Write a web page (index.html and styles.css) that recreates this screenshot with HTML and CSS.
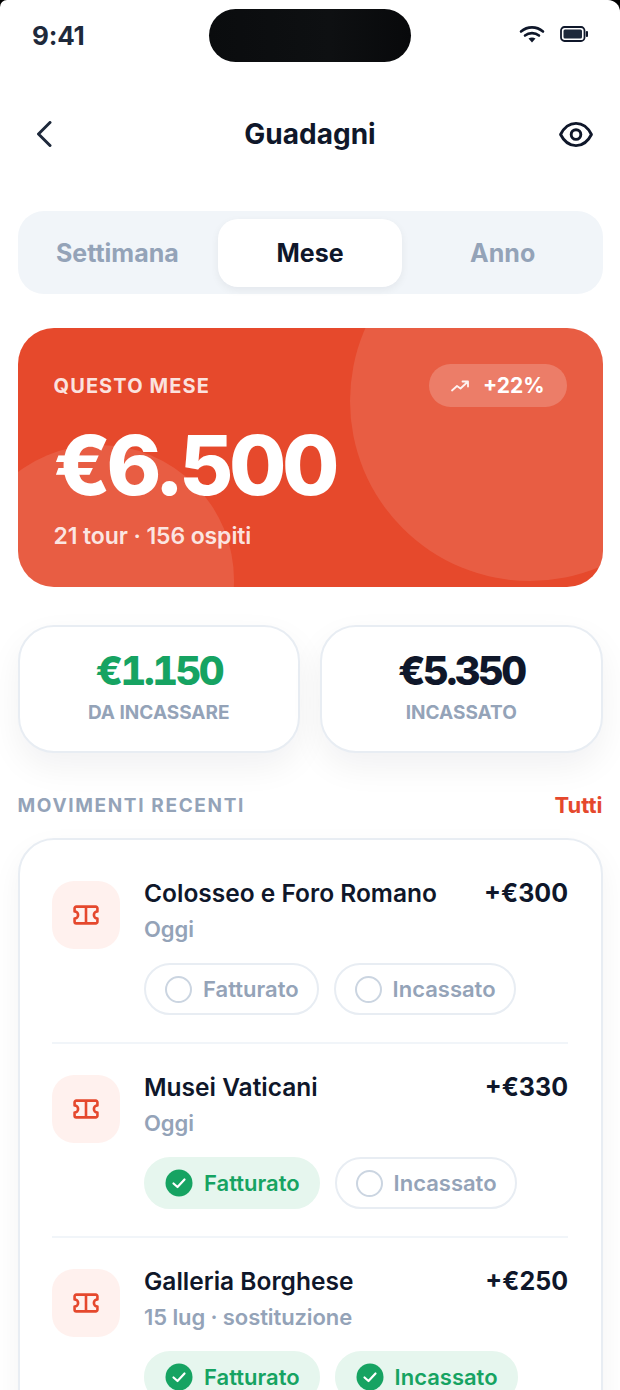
FILE: index.html
```html
<!DOCTYPE html>
<html lang="it">
<head>
    <meta charset="UTF-8">
    <meta name="viewport" content="width=device-width, initial-scale=1.0">
    <title>Guadagni</title>
    <link rel="stylesheet" href="styles.css">
</head>
<body>
    <div class="screen">
        <div class="status-bar">
            <span class="time">9:41</span>
            <div class="island"></div>
            <div class="status-icons">
                <svg width="26" height="18" viewBox="0 0 26 18"><path d="M2 6.500C8.500 1 17.500 1 24 6.500M6 10.500C10 7.300 16 7.300 20 10.500" fill="none" stroke="#0f172a" stroke-width="2.600" stroke-linecap="round"/><path d="M9.500 13.500C11.500 12 14.500 12 16.500 13.500L13 17.500Z" fill="#0f172a"/></svg>
                <svg width="28" height="16" viewBox="0 0 28 16"><rect x="1" y="1" width="23.500" height="14" rx="3.500" fill="none" stroke="#0f172a" stroke-width="1.800"/><rect x="3.500" y="3.500" width="18.500" height="9" rx="1.500" fill="#1e293b"/><rect x="25.800" y="5" width="2.200" height="6" rx="1" fill="#0f172a"/></svg>
            </div>
        </div>

        <div class="nav">
            <svg class="back" width="16" height="26" viewBox="0 0 16 26"><path d="M14 1.500L2.500 13L14 24.500" fill="none" stroke="#1e293b" stroke-width="3" stroke-linecap="round" stroke-linejoin="round"/></svg>
            <h1>Guadagni</h1>
            <svg class="eye" width="36" height="27" viewBox="0 0 36 28"><path d="M2 14C6 6 11.500 2.500 18 2.500S30 6 34 14C30 22 24.500 25.500 18 25.500S6 22 2 14Z" fill="none" stroke="#0f172a" stroke-width="3" stroke-linejoin="round"/><circle cx="18" cy="14" r="5" fill="none" stroke="#0f172a" stroke-width="3"/></svg>
        </div>

        <div class="tabs">
            <div class="tab">Settimana</div>
            <div class="tab active">Mese</div>
            <div class="tab">Anno</div>
        </div>

        <div class="hero">
            <div class="circle-big"></div>
            <div class="circle-small"></div>
            <div class="hero-top">
                <span class="hero-label">QUESTO MESE</span>
                <span class="trend">
                    <svg width="20" height="14" viewBox="0 0 20 14"><path d="M2 11.500L7 7L10.500 9.500L17.500 3M12.500 2.500H18V7.500" fill="none" stroke="#fff" stroke-width="1.800" stroke-linecap="round" stroke-linejoin="round" opacity="0.9"/></svg>
                    +22%
                </span>
            </div>
            <div class="hero-amount">€6.500</div>
            <div class="hero-sub">21 tour · 156 ospiti</div>
        </div>

        <div class="stats">
            <div class="stat">
                <div class="stat-value green">€1.150</div>
                <div class="stat-label">DA INCASSARE</div>
            </div>
            <div class="stat">
                <div class="stat-value">€5.350</div>
                <div class="stat-label">INCASSATO</div>
            </div>
        </div>

        <div class="section-head">
            <span class="section-title">MOVIMENTI RECENTI</span>
            <span class="section-link">Tutti</span>
        </div>

        <div class="list">
            <div class="row">
                <div class="row-icon">
                    <svg width="26" height="20" viewBox="0 0.500 28 21"><path d="M3.500 2H24.500A1.800 1.800 0 0 1 26.300 3.800V7.200A3.800 3.800 0 0 0 26.300 14.800V18.200A1.800 1.800 0 0 1 24.500 20H3.500A1.800 1.800 0 0 1 1.700 18.200V14.800A3.800 3.800 0 0 0 1.700 7.200V3.800A1.800 1.800 0 0 1 3.500 2ZM14 2V20" fill="none" stroke="#e5482d" stroke-width="2.800" stroke-linejoin="round"/></svg>
                </div>
                <div class="row-body">
                    <div class="row-top"><span class="row-title">Colosseo e Foro Romano</span><span class="row-amount">+€300</span></div>
                    <div class="row-sub">Oggi</div>
                    <div class="chips">
                        <span class="chip"><span class="radio"></span>Fatturato</span>
                        <span class="chip"><span class="radio"></span>Incassato</span>
                    </div>
                </div>
            </div>
            <div class="row">
                <div class="row-icon">
                    <svg width="26" height="20" viewBox="0 0.500 28 21"><path d="M3.500 2H24.500A1.800 1.800 0 0 1 26.300 3.800V7.200A3.800 3.800 0 0 0 26.300 14.800V18.200A1.800 1.800 0 0 1 24.500 20H3.500A1.800 1.800 0 0 1 1.700 18.200V14.800A3.800 3.800 0 0 0 1.700 7.200V3.800A1.800 1.800 0 0 1 3.500 2ZM14 2V20" fill="none" stroke="#e5482d" stroke-width="2.800" stroke-linejoin="round"/></svg>
                </div>
                <div class="row-body">
                    <div class="row-top"><span class="row-title">Musei Vaticani</span><span class="row-amount">+€330</span></div>
                    <div class="row-sub">Oggi</div>
                    <div class="chips">
                        <span class="chip done"><svg class="check" width="28" height="28" viewBox="0 0 28 28"><circle cx="14" cy="14" r="13.500" fill="#16a362"/><path d="M8.500 14.500L12.500 18L19.500 10.500" fill="none" stroke="#fff" stroke-width="2.200" stroke-linecap="round" stroke-linejoin="round"/></svg>Fatturato</span>
                        <span class="chip"><span class="radio"></span>Incassato</span>
                    </div>
                </div>
            </div>
            <div class="row">
                <div class="row-icon">
                    <svg width="26" height="20" viewBox="0 0.500 28 21"><path d="M3.500 2H24.500A1.800 1.800 0 0 1 26.300 3.800V7.200A3.800 3.800 0 0 0 26.300 14.800V18.200A1.800 1.800 0 0 1 24.500 20H3.500A1.800 1.800 0 0 1 1.700 18.200V14.800A3.800 3.800 0 0 0 1.700 7.200V3.800A1.800 1.800 0 0 1 3.500 2ZM14 2V20" fill="none" stroke="#e5482d" stroke-width="2.800" stroke-linejoin="round"/></svg>
                </div>
                <div class="row-body">
                    <div class="row-top"><span class="row-title">Galleria Borghese</span><span class="row-amount">+€250</span></div>
                    <div class="row-sub">15 lug · sostituzione</div>
                    <div class="chips">
                        <span class="chip done"><svg class="check" width="28" height="28" viewBox="0 0 28 28"><circle cx="14" cy="14" r="13.500" fill="#16a362"/><path d="M8.500 14.500L12.500 18L19.500 10.500" fill="none" stroke="#fff" stroke-width="2.200" stroke-linecap="round" stroke-linejoin="round"/></svg>Fatturato</span>
                        <span class="chip done"><svg class="check" width="28" height="28" viewBox="0 0 28 28"><circle cx="14" cy="14" r="13.500" fill="#16a362"/><path d="M8.500 14.500L12.500 18L19.500 10.500" fill="none" stroke="#fff" stroke-width="2.200" stroke-linecap="round" stroke-linejoin="round"/></svg>Incassato</span>
                    </div>
                </div>
            </div>
        </div>
    </div>
</body>
</html>
```

FILE: styles.css
```css
:root {
    --ink: #0f172a;
    --muted: #94a3b8;
    --line: #e8edf3;
    --red: #e6492c;
    --green: #16a362;
}
html, body {
    margin: 0;
    height: 1390px;
    overflow: hidden;
    background: #000;
}
body {
    font-family: 'Inter', 'Liberation Sans', sans-serif;
    color: var(--ink);
}
.screen {
    background: #fff;
    height: 1390px;
    border-radius: 7px 12px 0 0;
    padding: 0 17.500px;
    box-sizing: border-box;
    overflow: hidden;
}

.status-bar {
    display: grid;
    grid-template-columns: 1fr auto 1fr;
    align-items: center;
    padding: 8px 15px 0 14.500px;
}
.time {
    font-size: 26px;
    font-weight: 700;
    color: #1e293b;
    line-height: 52px;
    letter-spacing: -0.200px;
    padding-top: 2px;
}
.island {
    width: 202px;
    height: 53px;
    border-radius: 27px;
    background: linear-gradient(90deg, #0a0c0e, #0e1012 60%, #08090b);
}
.status-icons {
    display: flex;
    justify-content: flex-end;
    align-items: center;
    gap: 15px;
    padding-bottom: 3px;
}

.nav {
    display: grid;
    grid-template-columns: 1fr auto 1fr;
    align-items: center;
    padding: 0 9px;
    margin-top: 45px;
    height: 54px;
}
.back {
    margin-left: 9px;
}
.eye {
    justify-self: end;
}
.nav h1 {
    margin: 0;
    font-size: 28px;
    font-weight: 700;
    color: var(--ink);
}

.tabs {
    display: grid;
    grid-template-columns: 1fr 1fr 1fr;
    gap: 9px;
    padding: 8px 8px 7px;
    margin-top: 50px;
    background: #f1f5f9;
    border-radius: 26px;
}
.tab {
    height: 68px;
    line-height: 68px;
    text-align: center;
    font-size: 25px;
    font-weight: 700;
    color: var(--muted);
    border-radius: 20px;
}
.tab.active {
    background: #fff;
    color: var(--ink);
    box-shadow: 0 3px 8px rgba(15, 23, 42, 0.06);
}

.hero {
    position: relative;
    overflow: hidden;
    margin-top: 34px;
    height: 259px;
    padding: 36px;
    box-sizing: border-box;
    background: var(--red);
    border-radius: 36px;
    color: #fff;
}
.circle-big, .circle-small {
    position: absolute;
    border-radius: 50%;
    background: rgba(255, 255, 255, 0.11);
}
.circle-big {
    width: 360px;
    height: 360px;
    top: -107px;
    right: -107px;
}
.circle-small {
    width: 270px;
    height: 270px;
    left: -54px;
    bottom: -128px;
}
.hero-top, .hero-amount, .hero-sub {
    position: relative;
}
.hero-top {
    display: flex;
    justify-content: space-between;
    align-items: center;
    height: 43px;
}
.hero-label {
    font-size: 20px;
    font-weight: 700;
    letter-spacing: 1.100px;
    color: rgba(255, 255, 255, 0.85);
}
.trend {
    display: flex;
    align-items: center;
    gap: 13px;
    height: 43px;
    padding: 0 22px 0 21px;
    box-sizing: border-box;
    background: rgba(255, 255, 255, 0.2);
    border-radius: 22px;
    font-size: 21px;
    font-weight: 700;
}
.hero-amount {
    font-size: 83px;
    font-weight: 800;
    letter-spacing: -4.400px;
    line-height: 90px;
    margin-top: 13px;
}
.hero-sub {
    font-size: 23px;
    font-weight: 600;
    letter-spacing: -0.100px;
    margin-top: 12px;
    color: rgba(255, 255, 255, 0.85);
}

.stats {
    display: grid;
    grid-template-columns: 1fr 1fr;
    gap: 20px;
    margin-top: 38px;
}
.stat {
    height: 128px;
    box-sizing: border-box;
    border: 2px solid var(--line);
    border-radius: 36px;
    background: #fff;
    box-shadow: 0 14px 34px rgba(15, 23, 42, 0.06);
    text-align: center;
    padding-top: 20px;
}
.stat-value {
    font-size: 40px;
    font-weight: 800;
    font-variant-numeric: tabular-nums;
    letter-spacing: -2.500px;
    line-height: 48px;
}
.stat-value.green {
    color: var(--green);
}
.stat-label {
    font-size: 19px;
    font-weight: 700;
    color: var(--muted);
    margin-top: 6px;
}

.section-head {
    display: flex;
    justify-content: space-between;
    align-items: center;
    margin-top: 39px;
    height: 26px;
}
.section-title {
    font-size: 19px;
    font-weight: 700;
    letter-spacing: 1.650px;
    color: var(--muted);
}
.section-link {
    font-size: 22px;
    font-weight: 700;
    color: #e5482d;
}

.list {
    margin-top: 20px;
    border: 2px solid var(--line);
    border-radius: 36px;
    padding: 10px 32.500px 0;
    background: #fff;
    box-shadow: 0 12px 30px rgba(15, 23, 42, 0.05);
}
.row {
    display: flex;
    gap: 24px;
    padding-top: 31px;
    border-bottom: 2px solid #f1f5f9;
    height: 194px;
    box-sizing: border-box;
}
.row:last-child {
    border-bottom: 0;
}
.row-icon {
    flex: none;
    display: flex;
    align-items: center;
    justify-content: center;
    width: 68px;
    height: 68px;
    border-radius: 22px;
    background: #fff1ee;
}
.row-body {
    flex: 1;
}
.row-top {
    display: flex;
    justify-content: space-between;
    align-items: center;
    height: 24px;
}
.row-title {
    font-size: 24.500px;
    font-weight: 600;
}
.row-amount {
    font-size: 25px;
    font-weight: 700;
}
.row-sub {
    font-size: 22px;
    font-weight: 600;
    color: var(--muted);
    line-height: 28px;
    margin-top: 10px;
    letter-spacing: -0.100px;
}
.chips {
    display: flex;
    gap: 15px;
    margin-top: 20px;
}
.chip {
    display: flex;
    align-items: center;
    gap: 11px;
    height: 52px;
    padding: 0 18px 0 19px;
    box-sizing: border-box;
    border: 2px solid var(--line);
    border-radius: 26px;
    font-size: 22px;
    font-weight: 600;
    color: var(--muted);
}
.chip.done {
    background: #e6f6ee;
    border-color: #e6f6ee;
    color: var(--green);
}
.radio {
    width: 27px;
    height: 27px;
    box-sizing: border-box;
    border: 2px solid #cbd5e1;
    border-radius: 50%;
}
.check {
    display: block;
}
```
